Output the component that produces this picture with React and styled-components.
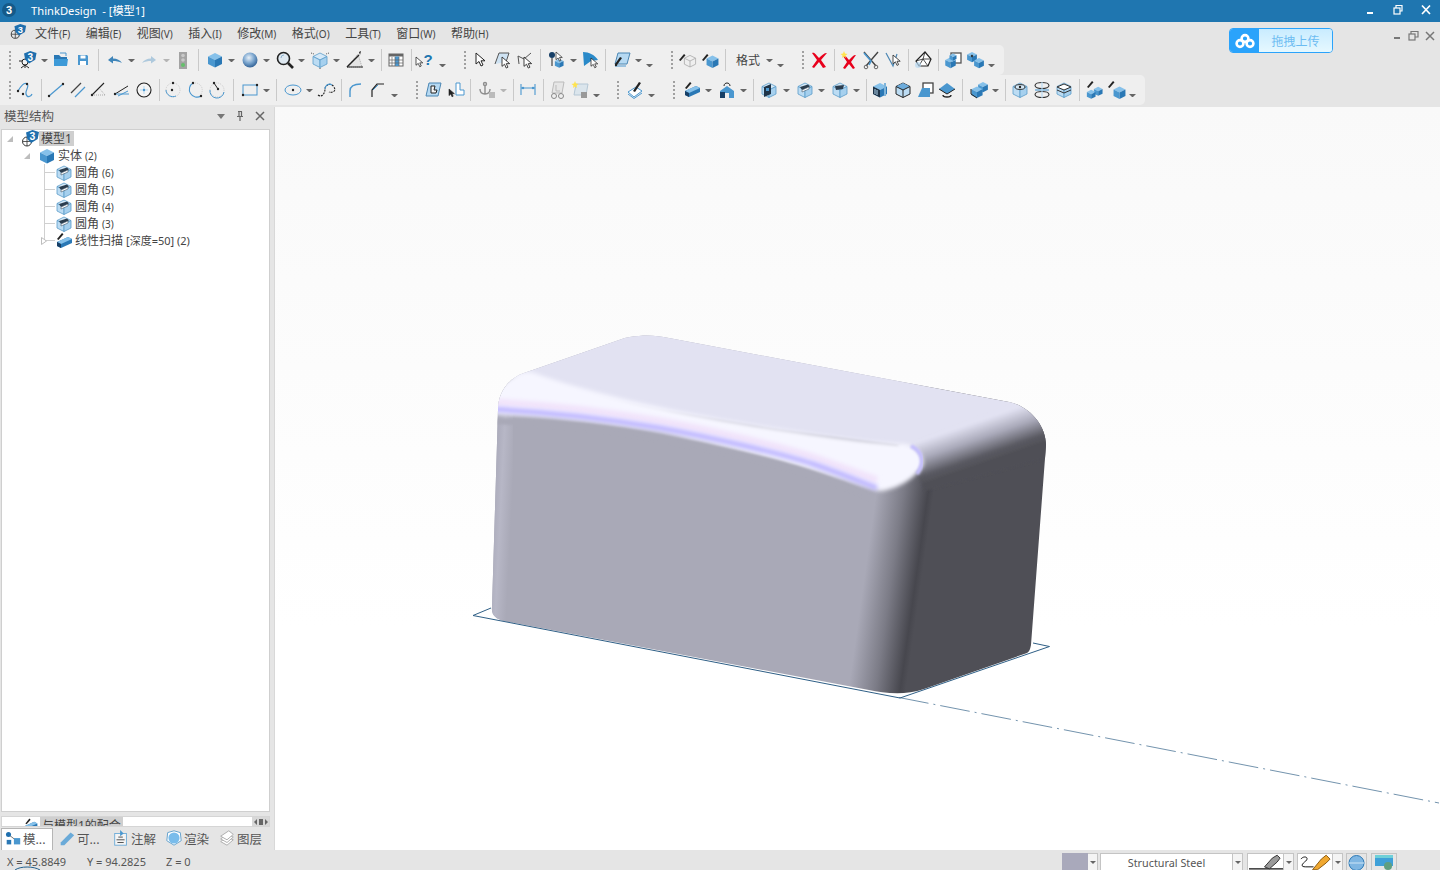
import React from 'react';
import styled, { createGlobalStyle } from 'styled-components';

const Global = createGlobalStyle`
  html, body { margin: 0; padding: 0; background: #e5e5e5; overflow: hidden; }
  * { box-sizing: border-box; }
`;
const FONT = `"Noto Sans", "Noto Sans CJK SC", sans-serif`;

const Page = styled.div`
  width: 1440px; height: 870px; display: flex; flex-direction: column; overflow: hidden;
  background: #e5e5e5; font-family: ${FONT}; font-size: 12px; color: #444;
`;
const TitleBar = styled.div`
  height: 22px; background: #1f76b0; color: #fff; display: flex; align-items: center;
  padding: 0 0 2px 2px; flex: none;
`;
const TitleText = styled.span`margin-left: 15px; font-size: 11.2px; white-space: pre;`;
const WinControls = styled.div`margin-left: auto; display: flex; gap: 12px; padding-right: 5px; align-items: center;`;
const Top = styled.div`display: flex; height: 83px; flex: none;`;
const TopLeft = styled.div`width: 1145px; flex: none;`;
const TopRight = styled.div`flex: 1; display: flex; padding: 6px 0 0 84px; align-items: flex-start; gap: 59px;`;
const MenuBar = styled.div`height: 23px; display: flex; align-items: center; padding: 0 0 2px 9px;`;
const MenuItem = styled.span`
  margin-left: ${p => p.$first ? 6 : 15.5}px; white-space: nowrap; font-size: 12px; color: #444;
  small { font-size: 10px; }
`;
const ToolRow = styled.div`
  height: 30px; width: ${p => p.$w}px; background: #efefef; border-radius: 0 5px 5px 0;
  display: flex; align-items: center;
`;
const Tool = styled.span`
  flex: none; width: 20px; height: 20px; margin-left: ${p => p.$gap}px; display: block;
  svg { display: block; }
`;
const Grip = styled.span`flex: none; width: 2px; height: 18px; margin-left: ${p => p.$gap}px; border-left: 2px dotted #a0a0a0;`;
const Sep = styled.span`flex: none; width: 1px; height: 22px; margin-left: ${p => p.$gap}px; background: #c9c9c9;`;
const Caret = styled.span`
  flex: none; width: 7px; height: 0; margin-left: ${p => p.$gap}px;
  border-left: 3px solid transparent; border-right: 3px solid transparent;
  border-top: 3px solid ${p => p.$pale ? '#b5b5b5' : '#666'};
  margin-top: ${p => p.$low ? 11 : 1}px;
`;
const ToolLabel = styled.span`flex: none; width: 26px; margin-left: ${p => p.$gap}px; text-align: center; font-size: 12px; color: #444;`;

const Upload = styled.div`
  width: 104px; height: 25px; border: 1px solid #2aa3fb; border-radius: 4px; display: flex; overflow: hidden; flex: none;
`;
const UploadIcon = styled.div`width: 29px; background: #2aa3fb; display: flex; align-items: center; justify-content: center;`;
const UploadText = styled.div`
  flex: 1; background: linear-gradient(#c9ecff, #e6f8ff); color: #6cbcf2; display: flex; align-items: center; justify-content: center; font-size: 12px;
`;
const MdiControls = styled.div`display: flex; gap: 6px; align-items: center; height: 14px; margin-top: 1px;`;

const Main = styled.div`flex: 1; display: flex; min-height: 0;`;
const Side = styled.div`width: 270px; flex: none; display: flex; flex-direction: column;`;
const SideHead = styled.div`height: 24px; display: flex; align-items: center; padding: 0 0 3px 4px; font-size: 12.5px; color: #555; flex: none;`;
const SideBtns = styled.div`margin-left: auto; display: flex; align-items: center; gap: 8px; padding-right: 4px;`;
const Tree = styled.div`flex: 1; margin-left: 1px; background: #fff; border: 1px solid #cfcfcf; min-height: 0;`;
const Row = styled.div`
  height: 17px; display: flex; align-items: center; position: relative; padding-left: ${p => p.$level * 17}px;
  &::before {
    content: ${p => p.$level === 2 ? '""' : 'none'}; position: absolute; left: 42px; top: 0; width: 1px;
    height: ${p => p.$last ? 9 : 17}px; background: #d0d0d0;
  }
  &::after {
    content: ${p => p.$level === 2 ? '""' : 'none'}; position: absolute; left: 43px; top: 8px; width: 10px; height: 1px; background: #d0d0d0;
  }
`;
const Expander = styled.span`
  width: 16px; flex: none; display: flex; justify-content: center; position: relative; z-index: 1;
`;
const RowIcon = styled.span`
  width: 16px; height: 16px; margin-left: 4px; flex: none; position: relative; z-index: 1;
  svg { display: block; margin: -2px; }
`;
const RowLabel = styled.span`
  margin-left: 1px; padding: 0 2px; white-space: nowrap; font-size: 12px; line-height: 15px; color: #444;
  background: ${p => p.$sel ? '#cfcfcf' : 'transparent'};
  small { font-size: ${p => p.$wide ? 11 : 10}px; margin-left: 3px; }
`;
const MiniList = styled.div`
  height: 11px; margin: 4px 0 0 1px; background: #fff; border: 1px solid #d5d5d5; display: flex; overflow: hidden; flex: none;
`;
const MiniIcon = styled.span`margin: 0 0 0 21px; width: 16px; height: 16px; flex: none;`;
const MiniLabel = styled.span`
  margin-left: 1px; background: #cfcfcf; height: 20px; line-height: 17px; padding: 0 2px; font-size: 12px; white-space: nowrap;
`;
const MiniGrip = styled.span`
  margin-left: auto; width: 17px; background: #d8d8d8; display: flex; align-items: center; justify-content: center;
`;
const Tabs = styled.div`height: 22px; margin-top: 1px; display: flex; align-items: center; flex: none;`;
const Tab = styled.div`
  height: 22px; display: flex; align-items: center; font-size: 12.5px; color: #555; gap: 1px; flex: none; padding-bottom: 2px;
  width: ${p => p.$w}px; padding-left: ${p => p.$active ? 2 : 5}px; margin-left: ${p => p.$active ? 1 : 0}px;
  background: ${p => p.$active ? '#fff' : 'transparent'};
  border: ${p => p.$active ? '1px solid #b5b5b5' : 'none'}; border-bottom: none;
`;
const Splitter = styled.div`width: 4px; flex: none; background: #e5e5e5;`;
const View = styled.div`
  flex: 1; margin-top: 2px; background: linear-gradient(#f9f9f9, #ffffff 70%); border-left: 1px solid #d8d8d8; min-width: 0;
  svg { display: block; }
`;
const Status = styled.div`
  height: 20px; flex: none; display: flex; align-items: center; font-size: 11px; color: #555; position: relative; white-space: pre;
`;
const Coord = styled.span`flex: none; width: ${p => p.$w}px; margin-left: ${p => p.$ml || 0}px; padding-top: 3px;`;
const CursorArc = styled.svg`position: absolute; left: 14px; bottom: 0;`;
const StatusRight = styled.div`margin-left: auto; display: flex; align-self: flex-end; height: 17px; padding-right: 43px;`;
const Swatch = styled.div`width: 26px; background: #a9a9bb;`;
const Combo = styled.div`
  width: ${p => p.$w}px; background: #fff; display: flex; border: 1px solid #c4c4c4; border-bottom: none; justify-content: center; align-items: center;
  font-size: 10.8px; color: #555;
  svg { display: block; }
`;
const Drop = styled.div`width: 10px; background: #f4f4f4; border: 1px solid #c4c4c4; border-left: none; border-bottom: none; display: flex; align-items: center; justify-content: center; flex: none;`;
const DropArrow = styled.span`border-left: 3px solid transparent; border-right: 3px solid transparent; border-top: 3px solid #666;`;
const ComboGroup = styled.div`display: flex; margin-left: ${p => p.$ml || 0}px;`;
const Pic = styled.div`width: ${p => p.$w}px; border: 1px solid #c4c4c4; border-bottom: none; display: flex; justify-content: center; align-items: center; margin-left: ${p => p.$ml || 0}px;`;

/* ---------- icons ---------- */
const B = '#4a97cf', D = '#2a78b5', L = '#b6d9f2', K = '#222';
const Solid = ({ t = '' }) => (
  <g transform={t}>
    <polygon points="10,3 17,6.5 10,10 3,6.5" fill="#86c1ea" />
    <polygon points="3,6.5 10,10 10,17.5 3,14" fill={B} />
    <polygon points="17,6.5 10,10 10,17.5 17,14" fill={D} />
  </g>
);
const Glass = ({ t = '' }) => (
  <g transform={t} stroke="#5a9cc9" strokeWidth=".8">
    <polygon points="10,3 17,6.5 10,10 3,6.5" fill="#d5e9f8" />
    <polygon points="3,6.5 10,10 10,17.5 3,14" fill="#bcdcf3" />
    <polygon points="17,6.5 10,10 10,17.5 17,14" fill="#a6d0ee" />
  </g>
);
const Wire = ({ c = K, t = '' }) => (
  <g transform={t} fill="none" stroke={c} strokeWidth="1">
    <polygon points="10,3 17,6.5 17,14 10,17.5 3,14 3,6.5" />
    <path d="M3 6.5 10 10 17 6.5M10 10V17.5" />
  </g>
);
const Arrow = ({ t = '', f = '#fff' }) => (
  <path transform={t} d="M0 0V11L3 8.5 5 13 7 12 5 7.8H9Z" fill={f} stroke={K} strokeWidth="1" strokeLinejoin="round" />
);
const Dot = ({ x, y, r = 1.2, c = K }) => <circle cx={x} cy={y} r={r} fill={c} />;
const Pen = ({ t = '' }) => <path transform={t} d="M0 7 5 1 6.5 2.3 1.5 8Z" fill={K} />;
const Shield = ({ x = 8, y = 1, s = 1 }) => (
  <g transform={`translate(${x} ${y}) scale(${s})`}>
    <path d="M0 2 5 0 10 1.5 9 7 4 10 1 7Z" fill="#1f6fae" />
    <text x="5" y="7.6" textAnchor="middle" fontSize="8" fontWeight="700" fill="#fff" fontFamily="Liberation Sans, sans-serif">3</text>
  </g>
);

const ICONS = {
  person3: <g><circle cx="7" cy="12" r="3" fill="#f4f4f4" stroke={K} /><path d="M7 15V18M3 18 7 15 11 18M1 11H4M10 11H13" stroke={K} fill="none" /><Shield x="6" y="1" s="1.25" /></g>,
  logo: <g><circle cx="7" cy="12.5" r="4.5" fill="none" stroke="#333" /><path d="M7 8V17M2.5 12.5H11.5" stroke="#333" strokeWidth=".8" /><Shield x="6" y="1" s="1.3" /></g>,
  folder: <g><path d="M3 5H8L10 7H16V16H3Z" fill={D} /><path d="M3 9H17L16 16H3Z" fill="#3d9ad8" /><path d="M9 3 15 3V6" stroke={B} fill="none" /></g>,
  save: <g><path d="M5 5H14L15 6V15H5Z" fill={B} /><rect x="7.5" y="5.5" width="5" height="3" fill="#fff" /><rect x="7" y="11" width="6" height="4" fill="#fff" /></g>,
  undo: <g><path d="M3 10 8 6V8.5C12 8.5 15 10 17 13 14 11.5 11 11 8 11V13.5Z" fill="#3f85b9" /></g>,
  redo: <g><path d="M17 10 12 6V8.5C8 8.5 5 10 3 13 6 11.5 9 11 12 11V13.5Z" fill="#aec9dd" /></g>,
  traffic: <g><rect x="6" y="2" width="8" height="17" fill="#a3a3a3" /><circle cx="10" cy="5.5" r="1.8" fill="#c9c9c9" /><circle cx="10" cy="10" r="1.8" fill="#c9c9c9" /><circle cx="10" cy="15" r="2" fill="#63c06a" /></g>,
  cube: <Solid />,
  sphere: <g><defs><radialGradient id="sph" cx=".42" cy=".35" r=".7"><stop offset="0" stopColor="#e8f0f8" /><stop offset=".5" stopColor="#7ea8d0" /><stop offset="1" stopColor="#28598f" /></radialGradient></defs><circle cx="10" cy="10" r="7.5" fill="url(#sph)" /></g>,
  zoom: <g><circle cx="8.5" cy="8.5" r="6" fill="#dfe9f1" stroke={K} strokeWidth="1.6" /><path d="M13 13 18 18" stroke={K} strokeWidth="2.6" /><path d="M6 8A3 3 0 0 1 9 5" stroke="#8fb2cd" fill="none" /></g>,
  wire: <g><Glass /><path d="M1 3 4 4M19 3 16 4M10 19V17" stroke="#555" strokeDasharray="1 1" /></g>,
  proto: <g><path d="M2 17H17L13 4Z" fill="#e4e4e4" stroke="#aaa" strokeDasharray="1 1" /><path d="M2 17 14 5" stroke={K} strokeWidth="1.4" /><path d="M2 17H18" stroke={K} /><path d="M14 2 16 1 15 5Z" fill={K} /></g>,
  table: <g><rect x="3" y="4" width="14" height="12" fill="#fff" stroke="#666" /><rect x="3" y="4" width="14" height="2.5" fill="#666" /><rect x="9" y="6.5" width="4" height="9.5" fill={B} /><path d="M3 10H17M3 13H17M6 7V16M9 7V16M13 7V16" stroke="#666" strokeWidth=".7" /></g>,
  help: <g><Arrow t="translate(1 7) scale(.75)" /><text x="13" y="15" textAnchor="middle" fontSize="15" fontWeight="700" fill="#1f76b0" fontFamily="Liberation Sans, sans-serif">?</text></g>,
  arrow: <Arrow t="translate(5 3)" />,
  arrowA: <g><path d="M3 14 7 3H17L14 12" fill="#cfe3f3" stroke="#555" /><Arrow t="translate(10 7) scale(.85)" /></g>,
  arrowB: <g><path d="M4 14 3 6 9 9 16 3" fill="none" stroke="#555" /><Arrow t="translate(9 7) scale(.85)" /></g>,
  pinCube: <g><path d="M5 8V16" stroke={K} /><circle cx="5" cy="5" r="3" fill="#173f66" /><Solid t="translate(6 7) scale(.62)" /><Arrow t="translate(9 2) scale(.7)" /></g>,
  sail: <g><path d="M3 2C9 2 15 5 18 10L11 11 4 16Z" fill="#2a8ac9" /><Arrow t="translate(11 8) scale(.75)" /></g>,
  planePen: <g><path d="M6 3H18L15 14H3Z" fill={L} stroke="#4b86b3" /><path d="M3 16H14" stroke={B} /><path d="M3 14 8 7 10 8 5 15Z" fill={K} /><Dot x="4" y="15" /></g>,
  penWire: <g><Wire c="#aaa" t="translate(4 3) scale(.8)" /><Pen t="translate(1 3)" /></g>,
  penSolid: <g><Solid t="translate(3 3) scale(.85)" /><Pen t="translate(1 3)" /></g>,
  redX: <path d="M3 3C5 2 6 3 10 8 13 5 15 3 18 3L12 10 17 17 14 18 10 12 5 18 3 17 8 10Z" fill="#e8001c" />,
  starX: <g><path d="M4 6C6 5 7 6 10 10 13 7 14 5 17 5L12 12 16 18 14 19 10 14 6 19 4 18 8 12Z" fill="#e8001c" /><path d="M5 1 6 3.5 8.5 4 6.5 5.5 7 8 5 6.5 3 8 3.5 5.5 1.5 4 4 3.5Z" fill="#ffe34d" /></g>,
  scissors: <g><path d="M3 2 15 16M17 2 5 16" stroke="#444" strokeWidth="1.4" /><path d="M3 3 10 11 8 15" stroke={B} strokeWidth="1.6" fill="none" /><circle cx="5" cy="17" r="1.8" fill="none" stroke="#666" /><circle cx="15" cy="17" r="1.8" fill="none" stroke="#666" /></g>,
  trim: <g><path d="M3 3 10 16 14 4" stroke="#4b86b3" fill="none" strokeWidth="1.2" /><Arrow t="translate(10 5) scale(.8)" /></g>,
  gem: <g><path d="M11 2 17 9 14 16H5L2 11Z" fill="#fff" stroke={K} strokeWidth="1.2" /><path d="M11 2 9 9 14 16M9 9 2 11M9 9 17 9M9 9 5 16" stroke={K} strokeWidth=".8" fill="none" /><circle cx="4" cy="15" r="3" fill={L} opacity=".7" /></g>,
  frameCube: <g><rect x="8" y="3" width="10" height="10" fill="#fff" stroke="#555" strokeWidth="1.3" /><Solid t="translate(0 5) scale(.75)" /><Solid t="translate(5 2) scale(.5)" /></g>,
  cubes: <g><Solid t="translate(0 0) scale(.7)" /><Solid t="translate(7 6) scale(.7)" /><rect x="6" y="5" width="2" height="2" fill={K} transform="rotate(45 7 6)" /></g>,
  spline: <g fill="none"><path d="M3 11C6 6 9 2 12 4S10 10 11 14 16 17 17 14" stroke={B} strokeWidth="1.2" /><Dot x="3" y="11" /><Dot x="12" y="4" /><Dot x="8" y="14" /></g>,
  line: <g><path d="M3 16 17 4" stroke={B} strokeWidth="1.2" /><Dot x="3" y="16" /><Dot x="17" y="4" /></g>,
  para: <g><path d="M3 13 13 3" stroke="#444" strokeWidth="1.2" /><path d="M7 17 17 7" stroke={B} strokeWidth="1.2" /></g>,
  angLine: <g><path d="M3 15 15 3" stroke={K} strokeWidth="1.1" /><path d="M3 15H17M10 8 16 15" stroke="#aaa" strokeDasharray="1 1" /><Dot x="3" y="15" /></g>,
  ang2: <g><path d="M3 14 16 6" stroke={K} /><path d="M3 14H17" stroke={B} /><path d="M6 16 16 11" stroke={B} /><Dot x="3" y="14" /></g>,
  circC: <g><circle cx="10" cy="10" r="7" fill="#f4f4f4" stroke={K} strokeWidth="1.1" /><path d="M10 6V14M6 10H14" stroke={L} /><Dot x="10" y="10" c={B} /></g>,
  arc1: <g><circle cx="10" cy="10" r="7" fill="none" stroke="#ccc" strokeDasharray="1 1" /><path d="M3 10A7 7 0 0 0 13 16" fill="none" stroke={B} /><Dot x="9" y="10" /><Dot x="10" y="3" /></g>,
  arc2: <g><path d="M8 3A7 7 0 1 0 16 16" fill="none" stroke={B} strokeWidth="1.1" /><path d="M10 3A7 7 0 0 1 16 14" fill="none" stroke="#ccc" strokeDasharray="1 1" /><Dot x="8" y="3" /><Dot x="16" y="16" /></g>,
  arc3: <g><circle cx="10" cy="10" r="7" fill="none" stroke="#ccc" strokeDasharray="1 1" /><path d="M3 10A7 7 0 0 0 17 12" fill="none" stroke={B} /><path d="M7 3 11 9" stroke={K} /><Dot x="11" y="9" /><Dot x="7" y="3" /></g>,
  rect: <g><rect x="3" y="5" width="14" height="10" fill="none" stroke={B} /><Dot x="3" y="15" /><Dot x="17" y="5" /></g>,
  ellipse: <g><ellipse cx="10" cy="10" rx="8" ry="5" fill="none" stroke={B} /><Dot x="10" y="10" /></g>,
  curve: <g fill="none"><path d="M2 15C6 18 9 13 9 9S15 2 18 7 15 13 13 12" stroke={K} strokeDasharray="2 1" strokeWidth="1.1" /><path d="M9 9C9 5 13 3 16 5" stroke={B} strokeWidth="1.2" /></g>,
  fillet: <path d="M4 17V11C4 6 8 4 15 4" fill="none" stroke={B} strokeWidth="1.4" />,
  chamfer: <g fill="none"><path d="M4 17V10L9 4H16" stroke={K} strokeWidth="1.2" /><path d="M5 10 10 5" stroke={B} /></g>,
  planeL: <g><path d="M6 3H18L15 16H3Z" fill={L} stroke="#4b86b3" /><path d="M8 6V13H13L14 10H11L12 6Z" fill="#f4f4f4" stroke={K} strokeWidth="1" /></g>,
  lCursor: <g><path d="M10 3H14V10H18V15H10Z" fill="#fff" stroke={B} /><Arrow t="translate(3 9) scale(.6)" f={K} /></g>,
  anchor: <g stroke="#8d8d8d" fill="none" strokeWidth="1.4"><circle cx="8" cy="4" r="1.5" /><path d="M8 6V14M3 9C3 13 6 14 8 14S13 13 13 9" /><rect x="12" y="12" width="6" height="6" fill="#bbb" stroke="none" /></g>,
  dim: <g><path d="M3 4V15M17 4V15M3 8H17" stroke={B} strokeWidth="1.1" /><Dot x="5" y="8" c={B} /><Dot x="15" y="8" c={B} /></g>,
  planeGl: <g><path d="M6 2H16L14 13H4Z" fill="#e6e6e6" stroke="#bbb" /><path d="M8 5V11H12" stroke="#bbb" fill="none" /><circle cx="6" cy="16" r="2.5" fill="none" stroke="#888" /><circle cx="13" cy="16" r="2.5" fill="none" stroke="#888" /></g>,
  planeStar: <g><path d="M6 4H18L16 15H4Z" fill="#dbe5ec" stroke="#b5c7d5" /><path d="M5 1 6 3.5 8.5 4 6.5 5.5 7 8 5 6.5 3 8 3.5 5.5 1.5 4 4 3.5Z" fill="#ffe34d" /><rect x="11" y="12" width="6" height="6" fill="#999" /></g>,
  note: <g><path d="M3 12 11 7 17 11 9 17Z" fill="#fff" stroke={B} /><path d="M3 14 9 18.5 17 13" fill="none" stroke={B} /><path d="M8 11 14 2 16 3 10 12Z" fill={K} /></g>,
  ext: <g><path d="M3 11 14 6 18 8V12L7 17 3 15Z" fill={D} /><path d="M3 11 14 6 18 8 7 13Z" fill="#86c1ea" /><path d="M3 11 7 13V17L3 15Z" fill="#173f66" /><Pen t="translate(3 1)" /></g>,
  house: <g><path d="M3 18V11L10 6 17 11V18H12V13H8V18Z" fill={B} /><path d="M3 18V12H8V18Z" fill="#173f66" /><path d="M7 6C7 2 13 2 13 6" fill="none" stroke={K} /></g>,
  faceBox: <g><Glass /><path d="M5 7 12 4V14L5 17Z" fill="#1f3448" /><rect x="7" y="8" width="3" height="3" fill={B} /></g>,
  filletCube: <g><Glass /><path d="M5 7 13 4.5 15 6.5 7 10Z" fill="#2b3d4e" /><path d="M7 10 14 7V9L7 12Z" fill="#fff" stroke="#2b3d4e" strokeWidth=".5" /></g>,
  cham: <g><Glass /><path d="M5 6 14 5 13 9 6 10Z" fill="#2b3d4e" /></g>,
  fBox: <g><Solid /><path d="M3 6.5 10 10V17.5L3 14Z" fill="#1f3448" /><path d="M5 9V14M7 10V15" stroke={L} /><path d="M15 3V16" stroke="#7fb4da" strokeWidth="2" /></g>,
  hexW: <g><polygon points="10,3 17,6.5 17,14 10,17.5 3,14 3,6.5" fill="#bcdcf3" stroke={K} /><polygon points="10,3 17,6.5 10,10 3,6.5" fill="#6dacdc" /><path d="M3 6.5 10 10 17 6.5M10 10V17.5" stroke={K} fill="none" /></g>,
  squares: <g><rect x="8" y="3" width="10" height="10" fill="#fff" stroke="#444" strokeWidth="1.3" /><path d="M3 17 7 8H15V17Z" fill={B} /></g>,
  gemFlat: <g><polygon points="10,3 18,9 10,14 2,9" fill={B} /><path d="M2 9 10 14 18 9" stroke={K} fill="none" /><path d="M6 15A4 2 0 0 0 14 15" stroke={K} strokeWidth="1.4" fill="none" /></g>,
  dbl: <g><Solid t="translate(7 0) scale(.7)" /><Solid t="translate(0 4) scale(.8)" /><path d="M2 9V14L8 18" stroke={K} fill="none" /></g>,
  sec1: <g><Glass /><ellipse cx="10" cy="7" rx="5" ry="2.4" fill="#d5e9f8" stroke="#333" /><Dot x="10" y="7" /></g>,
  sec2: <g fill="none" stroke="#333" strokeWidth="1.1"><ellipse cx="10" cy="5.5" rx="7" ry="3" /><ellipse cx="10" cy="14.5" rx="7" ry="3" /><path d="M3 10H17" stroke={B} /><path d="M10 2V18" stroke={L} /></g>,
  sec3: <g><Glass /><path d="M3 7 10 4 17 7 10 10Z" fill="#fff" stroke="#333" /><path d="M3 10 10 13 17 10" fill="none" stroke="#333" /></g>,
  penDbl: <g><Solid t="translate(8 5) scale(.62)" /><Solid t="translate(1 8) scale(.62)" /><Pen t="translate(3 0)" /></g>,
  penCube: <g><Solid t="translate(4 4) scale(.85)" /><Pen t="translate(1 0)" /></g>,
  blocks: <g><path d="M5 5 14 12" stroke="#666" /><circle cx="5" cy="5" r="2.8" fill="#1f6fae" /><rect x="11" y="9" width="7" height="7" fill={B} /><rect x="3" y="11" width="5" height="5" fill={D} /></g>,
  tabPen: <path d="M3 15 14 4 18 7 7 18 3 18Z" fill="#6aaad8" />,
  tabNote: <g><rect x="3" y="5" width="13" height="13" fill="#f4f4f4" stroke="#6aaad8" /><path d="M9 1 13 5 9 8Z" fill={B} /><path d="M5 12H14M6 15H13M7 9H12" stroke="#444" strokeWidth="1" /></g>,
  tabShield: <g><path d="M10 2 17 4 18 13 10 18 2 13 3 4Z" fill="#fff" stroke="#5a9cc9" /><circle cx="10" cy="10" r="6.2" fill="#79bceb" /></g>,
  tabLayers: <g fill="#fff" stroke="#a8a8a8"><path d="M3 14 10 9 17 12 10 18Z" /><path d="M3 11 10 6 17 9 10 15Z" /><path d="M3 8 12 2 17 6 10 12Z" /></g>,
};

const Ico = ({ n, s = 20 }) => <svg width={s} height={s} viewBox="0 0 20 20">{ICONS[n]}</svg>;

const ROW1 = [['grip',10],['person3',28],['car',44],['folder',61],['save',83],['sep',98],['undo',115],['car',131],['redo',149],['pale',166],['traffic',183],['sep',198],['cube',215],['car',231],['sphere',250],['car',266],['zoom',285],['car',301],['wire',320],['car',336],['proto',355],['car',371],['sep',381],['table',396],['sep',411],['help',425],['low',442],['grip',465],['arrow',481],['arrowA',502],['arrowB',525],['sep',540],['pinCube',557],['car',573],['sail',590],['sep',605],['planePen',622],['car',638],['low',649],['grip',672],['penWire',688],['penSolid',711],['sep',725],['label',748],['car',769],['low',780],['grip',803],['redX',819],['sep',834],['starX',849],['scissors',871],['trim',893],['sep',908],['gem',924],['sep',938],['frameCube',953],['cubes',975],['low',991]];
const ROW2 = [['grip',10],['spline',25],['sep',41],['line',56],['para',78],['angLine',99],['ang2',122],['circC',144],['sep',159],['arc1',173],['arc2',195],['arc3',217],['sep',233],['rect',250],['car',266],['sep',276],['ellipse',293],['car',309],['curve',326],['sep',341],['fillet',356],['chamfer',378],['low',394],['grip',417],['planeL',433],['lCursor',456],['sep',470],['anchor',487],['pale',503],['sep',513],['dim',528],['sep',543],['planeGl',558],['planeStar',580],['low',596],['grip',618],['note',635],['low',651],['grip',674],['ext',692],['car',708],['house',727],['car',743],['sep',753],['faceBox',769],['car',786],['filletCube',805],['car',821],['cham',840],['car',856],['sep',866],['fBox',880],['hexW',903],['squares',925],['gemFlat',947],['sep',962],['dbl',979],['car',995],['sep',1005],['sec1',1020],['sec2',1042],['sec3',1064],['sep',1079],['penDbl',1094],['penCube',1117],['low',1132]];

const WIDTHS = { grip: 2, sep: 1, car: 7, pale: 7, low: 7, label: 26 };
function ToolItems({ items }) {
  let right = 0;
  return items.map(([k, c], i) => {
    const w = WIDTHS[k] || 20;
    const gap = c - w / 2 - right;
    right = c + w / 2;
    if (k === 'grip') return <Grip key={i} $gap={gap} />;
    if (k === 'sep') return <Sep key={i} $gap={gap} />;
    if (k === 'car') return <Caret key={i} $gap={gap} />;
    if (k === 'pale') return <Caret key={i} $gap={gap} $pale />;
    if (k === 'low') return <Caret key={i} $gap={gap} $low />;
    if (k === 'label') return <ToolLabel key={i} $gap={gap}>格式</ToolLabel>;
    return <Tool key={i} $gap={gap}><Ico n={k} /></Tool>;
  });
}

const MENUS = [['文件','(F)'],['编辑','(E)'],['视图','(V)'],['插入','(I)'],['修改','(M)'],['格式','(O)'],['工具','(T)'],['窗口','(W)'],['帮助','(H)']];

const ExpTri = ({ open, c = '#bdbdbd' }) => (
  <svg width="8" height="8" viewBox="0 0 8 8">
    {open ? <path d="M1 7H7V1Z" fill={c} /> : <path d="M1.5 .5 6.5 4 1.5 7.5Z" fill="#fff" stroke={c} />}
  </svg>
);
const TREE = [
  { level: 0, exp: 'open', icon: 'logo', label: '模型1', sel: true },
  { level: 1, exp: 'open', icon: 'cube', label: '实体', n: '(2)' },
  { level: 2, icon: 'filletCube', label: '圆角', n: '(6)' },
  { level: 2, icon: 'filletCube', label: '圆角', n: '(5)' },
  { level: 2, icon: 'filletCube', label: '圆角', n: '(4)' },
  { level: 2, icon: 'filletCube', label: '圆角', n: '(3)' },
  { level: 2, exp: 'closed', icon: 'ext', label: '线性扫描', n: '[深度=50] (2)', last: true, wide: true },
];

const Model = () => (
  <svg width="1164" height="743" viewBox="276 107 1164 743">
    <defs>
      <clipPath id="sil">
        <path d="M640 336C650 335 660 336 670 338L1010 402C1030 406 1047 425 1047 445L1032 645C1031 650 1030 652 1028 653L925 689C905 696 885 693 870 690L505 621C497 619 492 615 493 607L499 410C499 392 510 378 525 373L620 340C628 337 634 336 640 336Z" />
      </clipPath>
      <linearGradient id="body" gradientUnits="userSpaceOnUse" x1="864" y1="586" x2="920.5" y2="594">
        <stop offset="0" stopColor="#a9a9b7" />
        <stop offset=".47" stopColor="#7c7c87" />
        <stop offset=".9" stopColor="#47474e" />
        <stop offset="1" stopColor="#4f4f56" />
      </linearGradient>
      <linearGradient id="leftEdge" gradientUnits="userSpaceOnUse" x1="492" y1="520" x2="512" y2="521">
        <stop offset="0" stopColor="#a9a9b9" />
        <stop offset=".45" stopColor="#b7b7c6" />
        <stop offset="1" stopColor="#a9a9b7" />
      </linearGradient>
      <linearGradient id="rim" gradientUnits="userSpaceOnUse" x1="960" y1="428" x2="973.7" y2="467.7">
        <stop offset="0" stopColor="#e2e2f2" />
        <stop offset=".4" stopColor="#a9a9b9" />
        <stop offset=".8" stopColor="#5a5a62" />
        <stop offset="1" stopColor="#4f4f56" />
      </linearGradient>
      <filter id="b1" x="-10%" y="-30%" width="120%" height="160%"><feGaussianBlur stdDeviation="1" /></filter>
      <filter id="b2" x="-10%" y="-40%" width="120%" height="180%"><feGaussianBlur stdDeviation="2.2" /></filter>
    </defs>
    <g clipPath="url(#sil)">
      <rect x="480" y="330" width="580" height="370" fill="url(#body)" />
      <rect x="488" y="370" width="26" height="260" fill="url(#leftEdge)" />
      <path d="M898 445 1020 398 1060 420 1060 455 926 491 918 470Z" fill="url(#rim)" filter="url(#b1)" />
      <path d="M480 330H1060V396L1018 403 905 446 780 430 660 410 585 395 527 378 480 380Z" fill="#e2e2f2" filter="url(#b1)" />
      <path d="M490 400C508 376 524 368 538 374 600 396 700 418 800 432 850 440 890 444 906 444 918 447 926 456 924 466 916 478 898 490 880 491 840 478 780 458 661 432 590 420 540 416 490 414Z" fill="#f6f6ff" filter="url(#b2)" />
      <path d="M495 402C550 405 610 412 661 421 710 430 780 446 814 457 840 466 860 474 878 480" fill="none" stroke="#f1e3fb" strokeWidth="7" filter="url(#b2)" />
      <path d="M490 409C550 412 610 419 661 428 710 437 780 453 814 464 840 473 860 481 878 488" fill="none" stroke="#b9b1ff" strokeWidth="5" filter="url(#b2)" />
      <path d="M912 446C924 452 926 462 918 474" fill="none" stroke="#c4befd" strokeWidth="4" filter="url(#b1)" />
      <path d="M480 421C550 422 610 428 661 438 710 447 780 462 814 474 840 483 860 491 876 498" fill="none" stroke="#a9a9b7" strokeWidth="6" filter="url(#b1)" />
    </g>
    <g fill="none" stroke="#2f5f86" strokeWidth="1">
      <path d="M492 608 474 615.5 901 698 1050.5 646.5 1034 643" />
      <path d="M900 697.5 1440 803" strokeDasharray="30 5 2 5" strokeWidth=".8" opacity=".85" />
    </g>
  </svg>
);

export default function App() {
  return (
    <Page>
      <Global />
      <TitleBar>
        <svg width="14" height="14" viewBox="0 0 14 14">
          <circle cx="7" cy="7" r="7" fill="#155a89" />
          <text x="7" y="11" textAnchor="middle" fontSize="11" fontWeight="700" fill="#fff" fontFamily="Liberation Sans, sans-serif">3</text>
        </svg>
        <TitleText>ThinkDesign  - [模型1]</TitleText>
        <WinControls>
          <svg width="16" height="12" viewBox="0 0 16 12"><rect x="4" y="8" width="6" height="2" fill="#fff" /></svg>
          <svg width="16" height="12" viewBox="0 0 16 12" fill="none" stroke="#fff" strokeWidth="1.2"><rect x="3" y="4" width="6" height="6" /><path d="M5 4V1.5H11V7H9" /></svg>
          <svg width="16" height="12" viewBox="0 0 16 12" stroke="#fff" strokeWidth="1.7"><path d="M3 1.5 11 10M11 1.5 3 10" /></svg>
        </WinControls>
      </TitleBar>
      <Top>
        <TopLeft>
          <MenuBar>
            <Tool $gap={0}><Ico n="logo" s={18} /></Tool>
            {MENUS.map(([a, b], i) => <MenuItem key={a} $first={i === 0}>{a}<small>{b}</small></MenuItem>)}
          </MenuBar>
          <ToolRow $w={1004}><ToolItems items={ROW1} /></ToolRow>
          <ToolRow $w={1145}><ToolItems items={ROW2} /></ToolRow>
        </TopLeft>
        <TopRight>
          <Upload>
            <UploadIcon>
              <svg width="20" height="16" viewBox="0 0 20 16" fill="none" stroke="#fff" strokeWidth="2.6"><circle cx="10" cy="5.5" r="3.4" /><circle cx="5" cy="10.5" r="3.4" /><circle cx="15" cy="10.5" r="3.4" /></svg>
            </UploadIcon>
            <UploadText>拖拽上传</UploadText>
          </Upload>
          <MdiControls>
            <svg width="10" height="12" viewBox="0 0 10 12"><rect x="2" y="7" width="6" height="2" fill="#777" /></svg>
            <svg width="11" height="12" viewBox="0 0 11 12" fill="none" stroke="#777" strokeWidth="1.2"><rect x="1" y="4" width="6" height="6" /><path d="M3 4V1.5H10V7H7" /></svg>
            <svg width="10" height="12" viewBox="0 0 10 12" stroke="#777" strokeWidth="1.5"><path d="M1 2 9 10M9 2 1 10" /></svg>
          </MdiControls>
        </TopRight>
      </Top>
      <Main>
        <Side>
          <SideHead>
            模型结构
            <SideBtns>
              <svg width="10" height="10" viewBox="0 0 10 10"><path d="M1 3H9L5 8Z" fill="#777" /></svg>
              <svg width="12" height="12" viewBox="0 0 12 12" stroke="#666" fill="none" strokeWidth="1.2"><path d="M4 1.5H8M5 1.5V6.5M7.5 1.5V6.5M3 6.5H9M6 6.5V11" /></svg>
              <svg width="12" height="12" viewBox="0 0 12 12" stroke="#666" strokeWidth="1.5"><path d="M2 2 10 10M10 2 2 10" /></svg>
            </SideBtns>
          </SideHead>
          <Tree>
            {TREE.map((t, i) => (
              <Row key={i} $level={t.level} $last={t.last}>
                <Expander>{t.exp && <ExpTri open={t.exp === 'open'} />}</Expander>
                <RowIcon><Ico n={t.icon} /></RowIcon>
                <RowLabel $sel={t.sel} $wide={t.wide}>{t.label}{t.n && <small>{t.n}</small>}</RowLabel>
              </Row>
            ))}
          </Tree>
          <MiniList>
            <MiniIcon><Ico n="ext" s={16} /></MiniIcon>
            <MiniLabel>与模型1的配合</MiniLabel>
            <MiniGrip><svg width="16" height="8" viewBox="0 0 16 8"><path d="M1 4 4 1V7ZM15 4 12 1V7Z" fill="#666" /><rect x="6" y="1" width="4" height="6" fill="#666" /></svg></MiniGrip>
          </MiniList>
          <Tabs>
            <Tab $active $w={52}><Ico n="blocks" s={18} />模...</Tab>
            <Tab $w={54}><Ico n="tabPen" s={18} />可...</Tab>
            <Tab $w={53}><Ico n="tabNote" s={18} />注解</Tab>
            <Tab $w={53}><Ico n="tabShield" s={18} />渲染</Tab>
            <Tab $w={53}><Ico n="tabLayers" s={18} />图层</Tab>
          </Tabs>
        </Side>
        <Splitter />
        <View><Model /></View>
      </Main>
      <Status>
        <Coord $ml={7} $w={80}>X = 45.8849</Coord>
        <Coord $w={79}>Y = 94.2825</Coord>
        <Coord $w={40}>Z = 0</Coord>
        <CursorArc width="28" height="4" viewBox="0 0 28 4"><path d="M1 4C6 0 20 0 26 4" fill="none" stroke="#1f5f8e" /></CursorArc>
        <StatusRight>
          <ComboGroup><Swatch /><Drop><DropArrow /></Drop></ComboGroup>
          <ComboGroup $ml={2}><Combo $w={133}>Structural Steel</Combo><Drop><DropArrow /></Drop></ComboGroup>
          <ComboGroup $ml={4}>
            <Combo $w={37}><svg width="36" height="16" viewBox="0 0 36 16"><path d="M1 15H36" stroke="#111" strokeWidth="1.2" /><path d="M17 13 25 4 30 1 33 4 30 8 22 15Z" fill="#9a9a9a" stroke="#333" /></svg></Combo>
            <Drop><DropArrow /></Drop>
          </ComboGroup>
          <ComboGroup $ml={3}>
            <Combo $w={36}><svg width="35" height="16" viewBox="0 0 35 16"><path d="M3 5C6 1 12 3 8 7 4 10 2 13 8 13H16" fill="none" stroke="#111" /><path d="M15 16 24 5 29 1 33 5 29 9 20 16Z" fill="#f0a830" stroke="#8a5a10" /></svg></Combo>
            <Drop><DropArrow /></Drop>
          </ComboGroup>
          <Pic $w={21} $ml={3}><svg width="17" height="17" viewBox="0 0 17 17"><circle cx="8.5" cy="9" r="7.5" fill="#7fb6e2" stroke="#2a78b5" /><path d="M1 9H16" stroke="#cfe6f7" /></svg></Pic>
          <Pic $w={26} $ml={4}><svg width="22" height="16" viewBox="0 0 22 16"><rect x="2" y="1" width="18" height="11" fill="#3fa0d8" /><rect x="2" y="1" width="18" height="3" fill="#6fd0d8" /><circle cx="15" cy="12" r="4" fill="#5f9f80" /></svg></Pic>
        </StatusRight>
      </Status>
    </Page>
  );
}
